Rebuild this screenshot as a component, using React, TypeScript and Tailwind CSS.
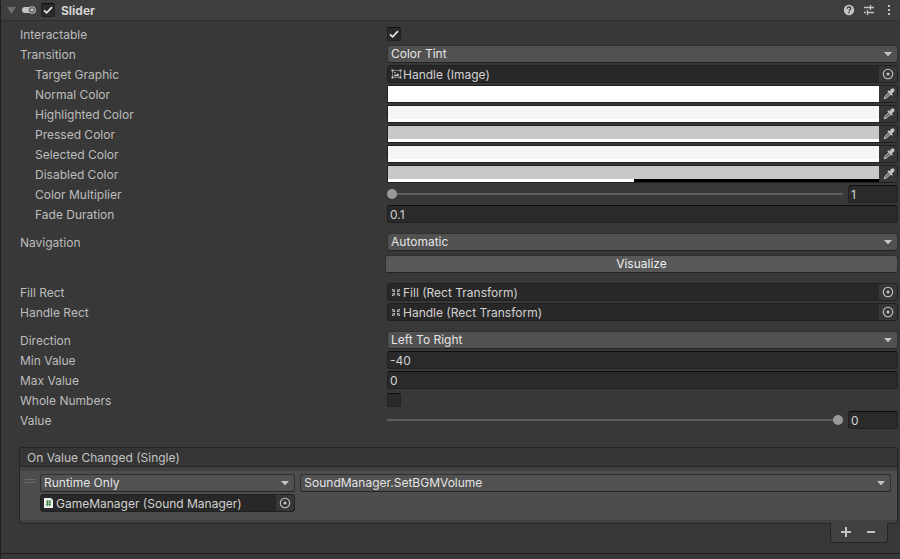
import { useId, useState, type ReactNode } from "react";

const fieldBox =
  "rounded-[3px] border border-[#212121] border-t-[#0d0d0d] bg-[#2a2a2a] text-[#d2d2d2]";

function Row({
  label,
  id,
  nested = false,
  children,
}: {
  label: string;
  id: string;
  nested?: boolean;
  children: ReactNode;
}) {
  return (
    <div className="grid grid-cols-[43%_minmax(0,1fr)] items-center">
      <label
        htmlFor={id}
        className={`h-[18px] truncate pt-px leading-[18px] ${nested ? "pl-[35px]" : "pl-5"}`}
      >
        {label}
      </label>
      <div className="flex h-[18px] min-w-0 items-center pr-0.5">{children}</div>
    </div>
  );
}

function Dropdown({ id, value, label }: { id?: string; value: string; label?: string }) {
  return (
    <div className="relative h-[18px] w-full min-w-0">
      <select
        id={id}
        aria-label={label}
        className="block h-[18px] w-full appearance-none rounded-[3px] border border-[#303030] border-b-[#242424] bg-[#515151] pr-5 pl-[3px] leading-4 text-[#e4e4e4] outline-none"
      >
        <option>{value}</option>
      </select>
      <svg
        className="pointer-events-none absolute top-[7px] right-[6px]"
        width="8"
        height="4"
        viewBox="0 0 8 4"
        fill="#c4c4c4"
      >
        <path d="M0 0h8L4.400 4h-.8z" />
      </svg>
    </div>
  );
}

function Tick({ id, checked, label }: { id?: string; checked: boolean; label?: string }) {
  const [on, setOn] = useState(checked);
  return (
    <span className="relative block size-3.5 shrink-0">
      <input
        id={id}
        aria-label={label}
        type="checkbox"
        checked={on}
        onChange={() => setOn(!on)}
        className="block size-3.5 appearance-none rounded-[2px] border border-[#212121] border-t-[#0d0d0d] bg-[#2a2a2a]"
      />
      {on && (
        <svg
          className="pointer-events-none absolute inset-0"
          width="14"
          height="14"
          viewBox="0 0 14 14"
          fill="none"
          stroke="#e8e8e8"
          strokeWidth="1.7"
        >
          <path d="M3 7.300 5.600 9.900 11 4.200" />
        </svg>
      )}
    </span>
  );
}

function TextField({ id, value, label }: { id?: string; value: string; label?: string }) {
  return (
    <input
      id={id}
      aria-label={label}
      defaultValue={value}
      className={`${fieldBox} block h-[18px] w-full min-w-0 px-0.5 pt-px leading-4 outline-none`}
    />
  );
}

function ObjectField({
  id,
  value,
  icon,
  label,
}: {
  id?: string;
  value: string;
  icon: ReactNode;
  label?: string;
}) {
  return (
    <div className="flex h-[18px] w-full min-w-0 items-center overflow-hidden rounded-[3px] border border-[#202020] bg-[#282828] pl-[3px]">
      {icon}
      <input
        id={id}
        aria-label={label}
        readOnly
        defaultValue={value}
        className="block h-4 min-w-0 flex-1 bg-transparent pt-px pl-px leading-4 text-[#d2d2d2] outline-none"
      />
      <button
        type="button"
        aria-label="Select object"
        className="flex h-4 w-[18px] shrink-0 items-center justify-center bg-[#373737]"
      >
        <svg width="12" height="12" viewBox="0 0 12 12" fill="none" stroke="#c4c4c4">
          <circle cx="6" cy="6" r="4.700" strokeWidth="1.100" />
          <circle cx="6" cy="6" r="1.500" fill="#c4c4c4" stroke="none" />
        </svg>
      </button>
    </div>
  );
}

function ColorField({ id, color, alpha }: { id: string; color: string; alpha: number }) {
  return (
    <div className="flex h-[18px] w-full min-w-0 rounded-r-[3px] border border-[#202020] bg-[#373737]">
      <div className="flex min-w-0 flex-1 flex-col">
        <input
          id={id}
          type="color"
          defaultValue={color}
          className="block h-[13px] w-full appearance-none border-0 bg-transparent p-0 [&::-webkit-color-swatch]:rounded-none [&::-webkit-color-swatch]:border-0 [&::-webkit-color-swatch-wrapper]:p-0"
        />
        <div className="h-[3px] bg-black">
          <div className="h-full bg-white" style={{ width: `${alpha * 100}%` }} />
        </div>
      </div>
      <button
        type="button"
        aria-label="Pick colour"
        className="flex h-4 w-[18px] shrink-0 items-center justify-center pl-0.5"
      >
        <svg width="12" height="12" viewBox="0 0 12 12">
          <path
            d="M6 4.300 2 8.300 1.200 10.800l2.500-.8L7.700 6"
            fill="#6a6a6a"
            stroke="#c4c4c4"
            strokeWidth="1"
          />
          <path
            d="M4.300 3.300l1.100-1.100 1.100 1L8.300 1C9.200.1 10.300.2 11 .9s.8 1.900-.1 2.800L8.800 5.500l1 1.100-1.100 1.100z"
            fill="#c4c4c4"
          />
        </svg>
      </button>
    </div>
  );
}

function SliderField({
  id,
  min,
  max,
  start,
  label,
}: {
  id: string;
  min: number;
  max: number;
  start: number;
  label: string;
}) {
  return (
    <div className="flex w-full min-w-0 items-center gap-[5px]">
      <input
        id={id}
        type="range"
        min={min}
        max={max}
        defaultValue={start}
        className="block h-2.5 min-w-0 flex-1 appearance-none bg-transparent [&::-webkit-slider-runnable-track]:h-0.5 [&::-webkit-slider-runnable-track]:bg-[#5e5e5e] [&::-webkit-slider-thumb]:-mt-1 [&::-webkit-slider-thumb]:size-2.5 [&::-webkit-slider-thumb]:appearance-none [&::-webkit-slider-thumb]:rounded-full [&::-webkit-slider-thumb]:bg-[#999999]"
      />
      <div className="w-[50px] shrink-0">
        <TextField label={label} value={String(start)} />
      </div>
    </div>
  );
}

const ImageIcon = (
  <svg className="shrink-0" width="11" height="10" viewBox="0 0 11 10" fill="#c4c4c4">
    <path d="M1.500 1.500h8v7h-8z" fill="none" stroke="#7c7c7c" strokeWidth="1" />
    <path d="M.5.500h2v2h-2zM8.500.500h2v2h-2zM.5 7.500h2v2h-2zM8.500 7.500h2v2h-2zM3.200 3h1.500v1.300H3.200zM3 7.300V6l1.200-.8 1 .8 1.500-1.700L8 5.600v1.700z" />
  </svg>
);

const RectIcon = (
  <svg className="shrink-0" width="11" height="10" viewBox="0 0 11 10">
    <path d="M1 2h3v3H1zM6 2h3v3H6zM1 6h3v3H1zM6 6h3v3H6z" fill="#6c6c6c" />
    <path
      d="M1 2h1v1H1zM2.500 3.500H4V5H2.500zM8 2h1v1H8zM6 3.500h1.500V5H6zM1 8h1v1H1zM2.500 6H4v1.500H2.500zM8 8h1v1H8zM6 6h1.500v1.500H6z"
      fill="#cccccc"
    />
  </svg>
);

const ScriptIcon = (
  <svg className="mr-0.5 shrink-0" width="9" height="10" viewBox="0 0 9 10">
    <path d="M0 0h7l2 2v8H0z" fill="#eeeeee" />
    <path
      d="M3.700 2 3.200 8.200M6 2 5.500 8.200M2 4h5.200M1.800 6.300H7"
      stroke="#3c8a4a"
      strokeWidth="1.100"
      fill="none"
    />
  </svg>
);

const colors = [
  { label: "Normal Color", color: "#ffffff", alpha: 1 },
  { label: "Highlighted Color", color: "#f5f5f5", alpha: 1 },
  { label: "Pressed Color", color: "#c8c8c8", alpha: 1 },
  { label: "Selected Color", color: "#f5f5f5", alpha: 1 },
  { label: "Disabled Color", color: "#c8c8c8", alpha: 0.5 },
];

function Header() {
  return (
    <header className="flex h-[21px] items-center border-b border-[#303030] bg-[#3e3e3e] pr-[5px] pl-1.5">
      <button type="button" aria-label="Collapse" className="w-[15px]">
        <svg width="9" height="7" viewBox="0 0 9 7" fill="#6e6e6e">
          <path d="M0 0h9L4.500 7z" />
        </svg>
      </button>
      <svg width="14" height="8" viewBox="0 0 14 8">
        <path d="M3 1h4.500a4 4 0 0 0 0 6H3a3 3 0 0 1 0-6z" fill="#c4c4c4" />
        <circle cx="10" cy="4" r="3.300" fill="none" stroke="#c4c4c4" strokeWidth="1.100" />
        <circle cx="10" cy="4" r="1.800" fill="#c4c4c4" />
      </svg>
      <div className="ml-[5px]">
        <Tick checked label="Enable Slider" />
      </div>
      <h2 className="ml-1.5 flex-1 pt-px text-[12px] leading-4 font-bold text-[#d2d2d2]">
        Slider
      </h2>
      <div className="flex items-center gap-2">
        <button type="button" aria-label="Help" className="relative block size-3">
          <svg width="12" height="12" viewBox="0 0 12 12" fill="none">
            <circle cx="6" cy="6" r="5.200" fill="#c4c4c4" />
            <path
              d="M4.200 4.800C4.200 3.500 5 3 6 3s1.800.6 1.800 1.600C7.800 5.800 6 5.800 6 7.200"
              stroke="#3e3e3e"
              strokeWidth="1.300"
            />
            <path d="M5.300 8h1.400v1.300H5.300z" fill="#3e3e3e" />
          </svg>
        </button>
        <button type="button" aria-label="Presets" className="block size-3">
          <svg width="12" height="12" viewBox="0 0 12 12" stroke="#c4c4c4" fill="none">
            <path d="M1 3.500h6M8 3.500h3M7.500 1v5M1 8.500h2M5 8.500h6M4.500 6v5" strokeWidth="1.300" />
          </svg>
        </button>
        <button type="button" aria-label="More options" className="block size-3">
          <svg width="12" height="12" viewBox="0 0 12 12" fill="#c4c4c4">
            <path d="M5 1h2v2H5zM5 5h2v2H5zM5 9h2v2H5z" />
          </svg>
        </button>
      </div>
    </header>
  );
}

function EventList() {
  return (
    <section className="mt-[18px] pr-0.5 pl-[19px]">
      <div className="rounded-[3px] border border-[#242424] bg-[#414141]">
        <h3 className="h-[19px] border-b border-[#242424] bg-[#353535] pt-px pl-[7px] leading-[18px] text-[#c4c4c4]">
          On Value Changed (Single)
        </h3>
        <div className="pt-1 pb-[3px]">
          <div className="flex h-[49px] items-start bg-[#4d4d4d] pt-[3px] pr-1.5 pl-[5px]">
            <div className="mt-[5px] mr-[5px] h-1 w-2.5 shrink-0 border-y border-[#6a6a6a]" />
            <div className="grid flex-1 grid-cols-[30%_minmax(0,1fr)] gap-x-[5px] gap-y-0.5">
              <Dropdown label="Call state" value="Runtime Only" />
              <Dropdown label="Function" value="SoundManager.SetBGMVolume" />
              <ObjectField
                label="Target object"
                value="GameManager (Sound Manager)"
                icon={ScriptIcon}
              />
            </div>
          </div>
        </div>
      </div>
      <div className="relative -mt-px mr-2.5 ml-auto flex h-5 w-[58px] items-start gap-[13px] rounded-b-[3px] border border-t-0 border-[#242424] bg-[#414141] pt-[3px] pl-[9px]">
        <button type="button" aria-label="Add" className="block size-3">
          <svg width="12" height="12" viewBox="0 0 12 12" fill="#c4c4c4">
            <path d="M1 5h4V1h2v4h4v2H7v4H5V7H1z" />
          </svg>
        </button>
        <button type="button" aria-label="Remove" className="block size-3">
          <svg width="12" height="12" viewBox="0 0 12 12" fill="#c4c4c4">
            <path d="M2 5h8v2H2z" />
          </svg>
        </button>
      </div>
    </section>
  );
}

export default function App() {
  const uid = useId();
  const key = (name: string) => `${uid}-${name}`;

  return (
    <main className="flex min-h-screen flex-col bg-[#383838] font-['Inter','Liberation_Sans',sans-serif] text-[12px] text-[#bdbdbd] shadow-[inset_1px_0_0_#1f1f1f]">
      <div className="pl-px">
        <Header />
      </div>

      <div className="mt-1 flex flex-col gap-2.5">
        <div className="flex flex-col gap-0.5">
          <Row label="Interactable" id={key("interactable")}>
            <Tick id={key("interactable")} checked />
          </Row>
          <Row label="Transition" id={key("transition")}>
            <Dropdown id={key("transition")} value="Color Tint" />
          </Row>
          <Row nested label="Target Graphic" id={key("graphic")}>
            <ObjectField id={key("graphic")} value="Handle (Image)" icon={ImageIcon} />
          </Row>
          {colors.map((c) => (
            <Row nested key={c.label} label={c.label} id={key(c.label)}>
              <ColorField id={key(c.label)} color={c.color} alpha={c.alpha} />
            </Row>
          ))}
          <Row nested label="Color Multiplier" id={key("multiplier")}>
            <SliderField
              id={key("multiplier")}
              min={1}
              max={5}
              start={1}
              label="Color Multiplier value"
            />
          </Row>
          <Row nested label="Fade Duration" id={key("fade")}>
            <TextField id={key("fade")} value="0.1" />
          </Row>
        </div>

        <div className="flex flex-col gap-1">
          <Row label="Navigation" id={key("navigation")}>
            <Dropdown id={key("navigation")} value="Automatic" />
          </Row>
          <div className="grid grid-cols-[43%_minmax(0,1fr)]">
            <button
              type="button"
              className="col-start-2 mr-0.5 -ml-0.5 h-[18px] rounded-[3px] border border-[#303030] border-b-[#242424] bg-[#585858] leading-4 text-[#eeeeee]"
            >
              Visualize
            </button>
          </div>
        </div>

        <div className="flex flex-col gap-0.5">
          <Row label="Fill Rect" id={key("fill")}>
            <ObjectField id={key("fill")} value="Fill (Rect Transform)" icon={RectIcon} />
          </Row>
          <Row label="Handle Rect" id={key("handle")}>
            <ObjectField id={key("handle")} value="Handle (Rect Transform)" icon={RectIcon} />
          </Row>
        </div>

        <div className="flex flex-col gap-0.5">
          <Row label="Direction" id={key("direction")}>
            <Dropdown id={key("direction")} value="Left To Right" />
          </Row>
          <Row label="Min Value" id={key("min")}>
            <TextField id={key("min")} value="-40" />
          </Row>
          <Row label="Max Value" id={key("max")}>
            <TextField id={key("max")} value="0" />
          </Row>
          <Row label="Whole Numbers" id={key("whole")}>
            <Tick id={key("whole")} checked={false} />
          </Row>
          <Row label="Value" id={key("value")}>
            <SliderField id={key("value")} min={-40} max={0} start={0} label="Value number" />
          </Row>
        </div>
      </div>

      <EventList />

      <div className="mt-2.5 flex-1 border-t border-[#1f1f1f] pl-px">
        <div className="h-full bg-[#3c3c3c]" />
      </div>
    </main>
  );
}
